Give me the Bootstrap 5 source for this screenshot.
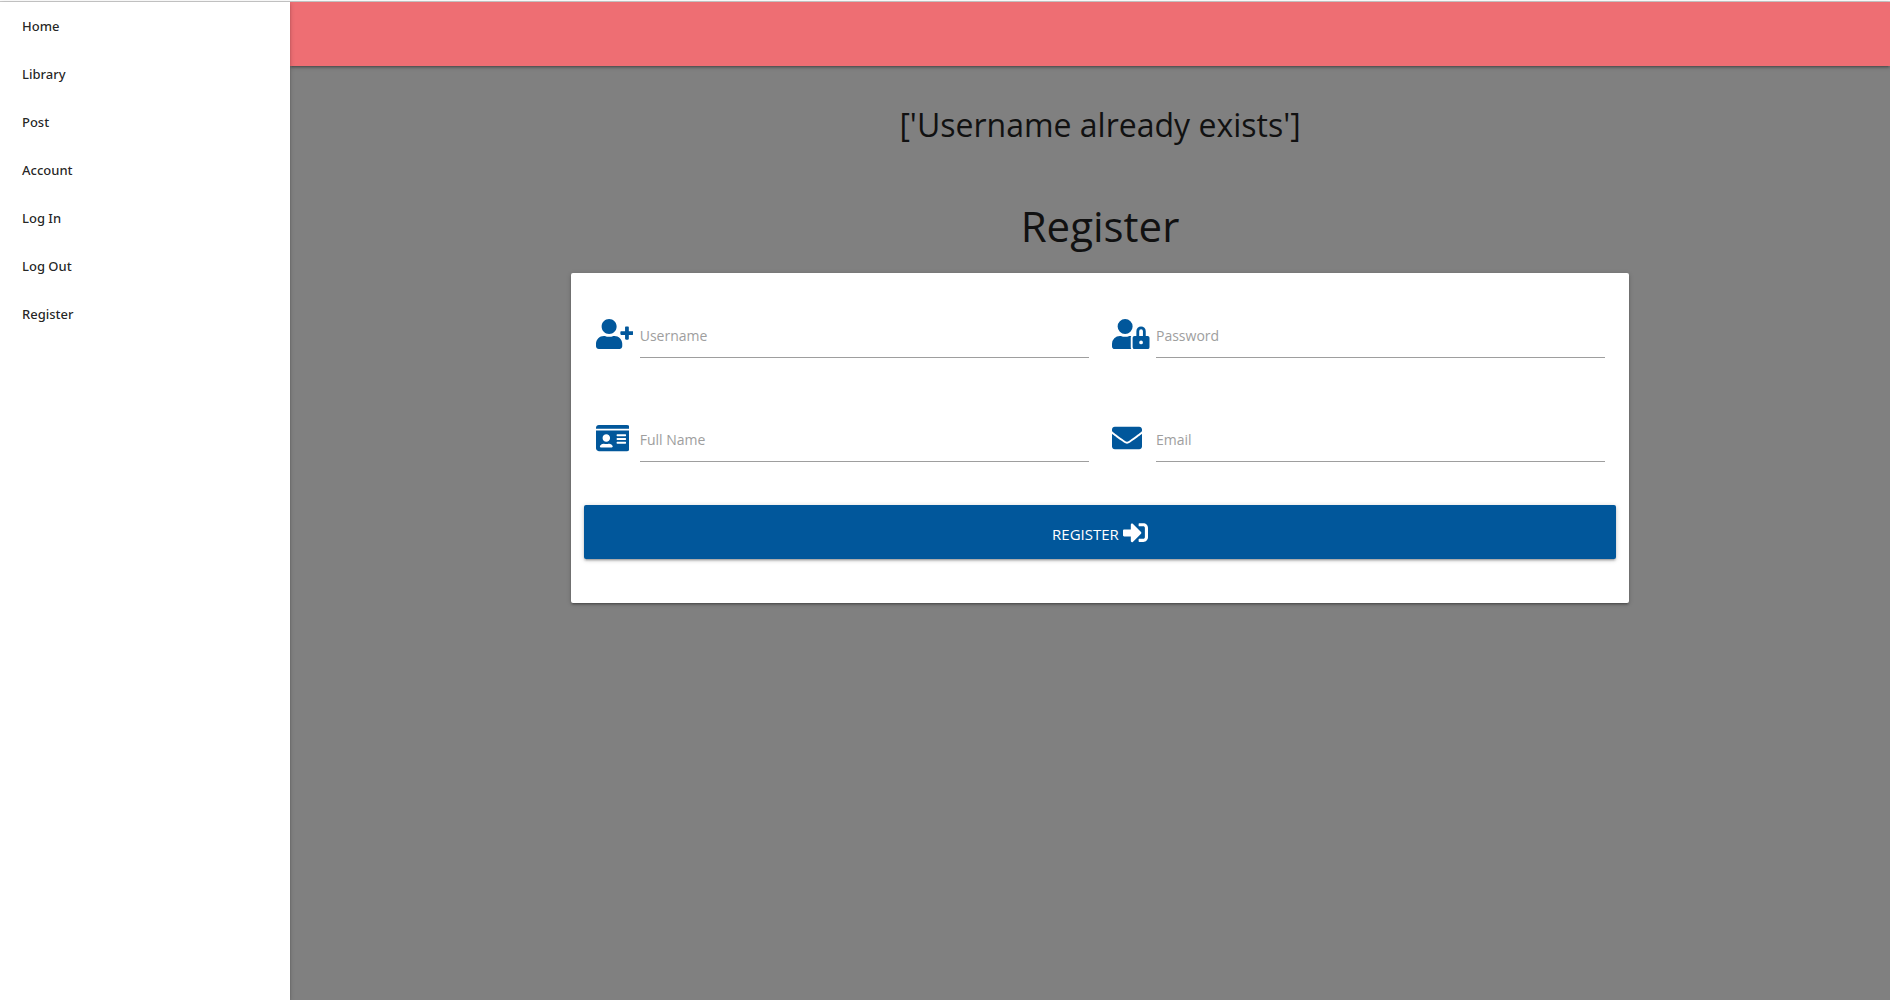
<!DOCTYPE html>
<html lang="en">
<head>
<meta charset="utf-8">
<meta name="viewport" content="width=device-width, initial-scale=1">
<title>Register</title>
<link href="https://cdn.jsdelivr.net/npm/bootstrap@5.3.0/dist/css/bootstrap.min.css" rel="stylesheet">
<style>
  :root { --coral: #ee6e73; --blue: #01579b; --ink: #111; }
  body { font-family: "Segoe UI", "Open Sans", "Noto Sans", sans-serif; font-size: 14px; background: #808080; color: var(--ink); }
  .top-rule { height: 2px; background: #fff; border-bottom: 1px solid #ccc; }
  .side-menu { width: 290px; z-index: 2; box-shadow: 0 2px 2px rgba(0,0,0,.14), 0 3px 1px -2px rgba(0,0,0,.12), 0 1px 5px rgba(0,0,0,.2); }
  .side-menu .nav-link { height: 48px; line-height: 48px; padding: 0 22px; font-family: "Segoe UI", "Noto Sans", sans-serif; font-size: 13px; font-weight: 500; color: rgba(0,0,0,.87); }
  .side-menu .nav-link:hover { background: rgba(0,0,0,.05); }
  .top-bar { height: 64px; background: var(--coral); box-shadow: 0 2px 2px rgba(0,0,0,.14), 0 3px 1px -2px rgba(0,0,0,.12), 0 1px 5px rgba(0,0,0,.2); }
  .page-main { padding-left: 20px; }
  .notice { font-size: 32px; line-height: 38px; margin: 40px 0 58px; font-weight: 400; }
  .page-title { font-size: 42px; line-height: 48px; margin: 0 0 23px; font-weight: 400; }
  .form-panel { width: 67%; min-width: 320px; padding: 40px 13px 44px; border: 0; border-radius: 2px; box-shadow: 0 2px 2px rgba(0,0,0,.14), 0 3px 1px -2px rgba(0,0,0,.12), 0 1px 5px rgba(0,0,0,.2); }
  .form-fields { --bs-gutter-x: 22px; --bs-gutter-y: 59px; margin-left: 0; margin-right: 0; }
  .field-icon { width: 45px; flex: none; padding: 6px 0 0 1px; color: var(--blue); }
  .field-icon svg, .btn-send svg { display: block; fill: currentColor; }
  .field-icon svg { height: 30px; }
  .line-input { height: 45px; padding: 0; border: 0; border-bottom: 1px solid #9e9e9e; border-radius: 0; font-size: 14px; background: transparent; }
  .line-input:focus { border-color: var(--blue); box-shadow: 0 1px 0 var(--blue); background: transparent; }
  .line-label { left: 0; top: 0; line-height: 46px; color: #9e9e9e; pointer-events: none; }
  .line-input:not(:placeholder-shown) + .line-label, .line-input:focus + .line-label { top: -28px; font-size: 12px; }
  .btn-send, .btn-send:hover { height: 54px; margin-top: 43px; background: var(--blue); color: #fff; border: 0; border-radius: 2px; font-size: 15px; box-shadow: 0 2px 2px rgba(0,0,0,.14), 0 3px 1px -2px rgba(0,0,0,.12), 0 1px 5px rgba(0,0,0,.2); }
  .btn-send span { padding-top: 5px; }
</style>
<script src="https://cdn.jsdelivr.net/npm/bootstrap@5.3.0/dist/js/bootstrap.bundle.min.js"></script>
</head>
<body class="d-flex flex-column min-vh-100">
<div class="top-rule"></div>
<div class="d-flex flex-grow-1">
  <nav class="side-menu bg-white flex-shrink-0 position-relative" aria-label="Main">
    <ul class="nav flex-column">
      <li class="nav-item"><a class="nav-link" href="#">Home</a></li>
      <li class="nav-item"><a class="nav-link" href="#">Library</a></li>
      <li class="nav-item"><a class="nav-link" href="#">Post</a></li>
      <li class="nav-item"><a class="nav-link" href="#">Account</a></li>
      <li class="nav-item"><a class="nav-link" href="#">Log In</a></li>
      <li class="nav-item"><a class="nav-link" href="#">Log Out</a></li>
      <li class="nav-item"><a class="nav-link" href="#">Register</a></li>
    </ul>
  </nav>
  <div class="flex-grow-1">
    <header class="top-bar"></header>
    <main class="page-main d-flex flex-column align-items-center">
      <h4 class="notice text-center">['Username already exists']</h4>
      <h3 class="page-title text-center">Register</h3>
      <form class="card form-panel">
        <div class="row form-fields mt-0">
          <div class="col-12 col-md-6 d-flex mt-0">
            <div class="field-icon">
              <svg viewBox="0 0 640 512" aria-hidden="true"><path d="M624 208h-64v-64c0-8.800-7.200-16-16-16h-32c-8.800 0-16 7.200-16 16v64h-64c-8.800 0-16 7.200-16 16v32c0 8.800 7.200 16 16 16h64v64c0 8.800 7.200 16 16 16h32c8.800 0 16-7.200 16-16v-64h64c8.800 0 16-7.200 16-16v-32c0-8.800-7.200-16-16-16zm-400 48c70.700 0 128-57.300 128-128S294.700 0 224 0 96 57.300 96 128s57.300 128 128 128zm89.600 32h-16.700c-22.200 10.200-46.900 16-72.900 16s-50.600-5.800-72.900-16h-16.700C60.200 288 0 348.200 0 422.400V464c0 26.500 21.500 48 48 48h352c26.500 0 48-21.500 48-48v-41.600c0-74.200-60.200-134.400-134.400-134.400z"/></svg>
            </div>
            <div class="position-relative flex-grow-1">
              <input class="form-control line-input" id="username" type="text" placeholder=" ">
              <label class="line-label position-absolute" for="username">Username</label>
            </div>
          </div>
          <div class="col-12 col-md-6 d-flex mt-0">
            <div class="field-icon">
              <svg viewBox="0 0 640 512" aria-hidden="true"><path d="M224 256A128 128 0 1 0 96 128a128 128 0 0 0 128 128zm96 64a63.080 63.080 0 0 1 8.100-30.500c-4.800-.5-9.500-1.500-14.500-1.500h-16.700a174.080 174.080 0 0 1-145.800 0h-16.700A134.430 134.430 0 0 0 0 422.400V464a48 48 0 0 0 48 48h280.900a63.540 63.540 0 0 1-8.900-32zm288-32h-32v-80a80 80 0 0 0-160 0v80h-32a32 32 0 0 0-32 32v160a32 32 0 0 0 32 32h224a32 32 0 0 0 32-32V320a32 32 0 0 0-32-32zM496 432a32 32 0 1 1 32-32 32 32 0 0 1-32 32zm32-144h-64v-80a32 32 0 0 1 64 0z"/></svg>
            </div>
            <div class="position-relative flex-grow-1">
              <input class="form-control line-input" id="password" type="password" placeholder=" ">
              <label class="line-label position-absolute" for="password">Password</label>
            </div>
          </div>
          <div class="col-12 col-md-6 d-flex">
            <div class="field-icon">
              <svg viewBox="0 0 576 512" aria-hidden="true"><path d="M528 32H48C21.500 32 0 53.500 0 80v16h576V80c0-26.500-21.500-48-48-48zM0 432c0 26.500 21.500 48 48 48h480c26.500 0 48-21.500 48-48V128H0v304zm352-232c0-4.400 3.600-8 8-8h144c4.400 0 8 3.600 8 8v16c0 4.400-3.600 8-8 8H360c-4.400 0-8-3.600-8-8v-16zm0 64c0-4.400 3.600-8 8-8h144c4.400 0 8 3.600 8 8v16c0 4.400-3.600 8-8 8H360c-4.400 0-8-3.600-8-8v-16zm0 64c0-4.400 3.600-8 8-8h144c4.400 0 8 3.600 8 8v16c0 4.400-3.600 8-8 8H360c-4.400 0-8-3.600-8-8v-16zM176 192c35.300 0 64 28.700 64 64s-28.700 64-64 64-64-28.700-64-64 28.700-64 64-64zM67.100 396.200C75.500 370.500 99.600 352 128 352h8.200c12.300 5.100 25.700 8 39.800 8s27.600-2.900 39.800-8h8.200c28.400 0 52.500 18.500 60.900 44.200 3.200 9.900-5.200 19.800-15.600 19.800H82.700c-10.400 0-18.800-10-15.600-19.800z"/></svg>
            </div>
            <div class="position-relative flex-grow-1">
              <input class="form-control line-input" id="fullname" type="text" placeholder=" ">
              <label class="line-label position-absolute" for="fullname">Full Name</label>
            </div>
          </div>
          <div class="col-12 col-md-6 d-flex">
            <div class="field-icon">
              <svg viewBox="0 0 512 512" aria-hidden="true"><path d="M502.300 190.800c3.900-3.100 9.700-.2 9.700 4.700V400c0 26.500-21.500 48-48 48H48c-26.500 0-48-21.500-48-48V195.600c0-5 5.700-7.800 9.700-4.700 22.400 17.400 52.100 39.500 154.100 113.600 21.100 15.400 56.700 47.800 92.200 47.600 35.700.3 72-32.800 92.300-47.600 102-74.100 131.600-96.300 154-113.700zM256 320c23.200.4 56.600-29.200 73.400-41.400 132.700-96.300 142.800-104.700 173.400-128.700 5.800-4.500 9.200-11.500 9.200-18.900v-19c0-26.500-21.500-48-48-48H48c-26.500 0-48 21.500-48 48v19c0 7.400 3.400 14.300 9.200 18.900 30.600 23.900 40.700 32.400 173.400 128.700 16.800 12.200 50.200 41.800 73.400 41.400z"/></svg>
            </div>
            <div class="position-relative flex-grow-1">
              <input class="form-control line-input" id="email" type="email" placeholder=" ">
              <label class="line-label position-absolute" for="email">Email</label>
            </div>
          </div>
        </div>
        <button class="btn btn-send w-100 d-flex justify-content-center align-items-center gap-1 text-uppercase" type="submit">
          <span>Register</span>
          <svg width="25" height="25" viewBox="0 0 512 512" aria-hidden="true"><path d="M416 448h-84c-6.600 0-12-5.400-12-12v-40c0-6.600 5.400-12 12-12h84c17.700 0 32-14.300 32-32V160c0-17.700-14.300-32-32-32h-84c-6.600 0-12-5.400-12-12V76c0-6.600 5.400-12 12-12h84c53 0 96 43 96 96v192c0 53-43 96-96 96zm-47-201L201 79c-15-15-41-4.500-41 17v96H24c-13.300 0-24 10.700-24 24v96c0 13.300 10.700 24 24 24h136v96c0 21.500 26 32 41 17l168-168c9.300-9.400 9.300-24.600 0-34z"/></svg>
        </button>
      </form>
    </main>
  </div>
</div>
</body>
</html>
